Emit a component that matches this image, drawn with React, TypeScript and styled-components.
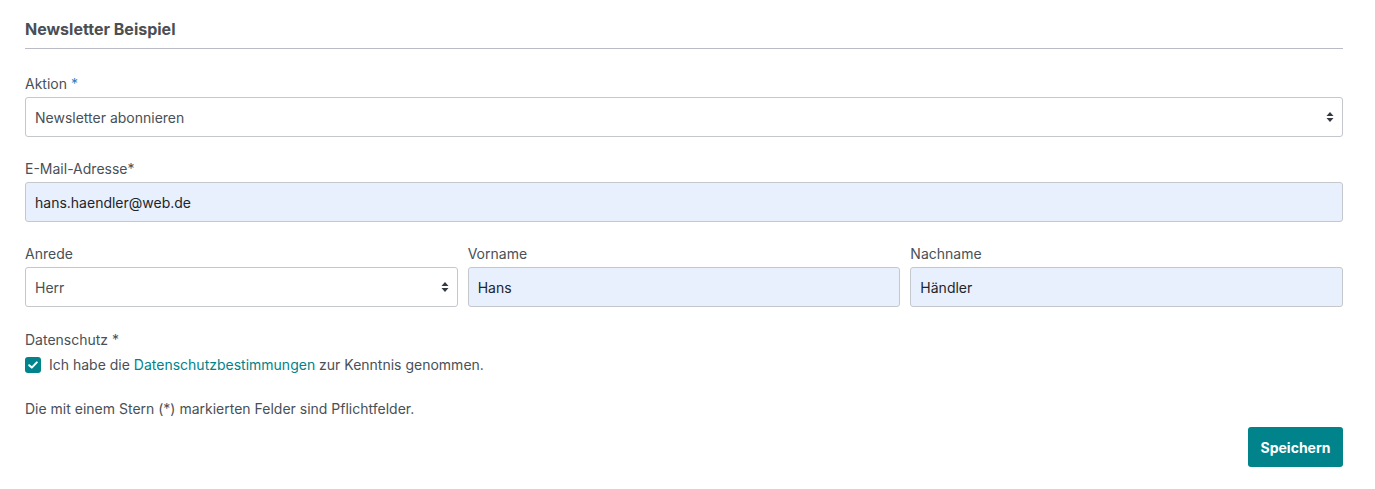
import React from "react";
import styled, { createGlobalStyle } from "styled-components";

const GlobalStyle = createGlobalStyle`
  * { box-sizing: border-box; }
  body {
    margin: 0;
    background: #ffffff;
    font-family: Inter, "Liberation Sans", sans-serif;
    color: #495057;
  }
`;

const App = () => {
  return (
    <>
      <GlobalStyle />
      <Page>
        <Title>Newsletter Beispiel</Title>
        <Form>
          <Field>
            <Label>
              Aktion <Star>*</Star>
            </Label>
            <SelectBox>
              <span>Newsletter abonnieren</span>
              <Caret />
            </SelectBox>
          </Field>
          <Field>
            <Label>E-Mail-Adresse*</Label>
            <InputBox filled>hans.haendler@web.de</InputBox>
          </Field>
          <Row>
            <Field>
              <Label>Anrede</Label>
              <SelectBox>
                <span>Herr</span>
                <Caret />
              </SelectBox>
            </Field>
            <Field>
              <Label>Vorname</Label>
              <InputBox filled>Hans</InputBox>
            </Field>
            <Field>
              <Label>Nachname</Label>
              <InputBox filled>Händler</InputBox>
            </Field>
          </Row>
          <Consent>
            <Label>Datenschutz *</Label>
            <CheckRow>
              <CheckBox>
                <svg width="10" height="8" viewBox="0 0 10 8">
                  <path
                    d="M1.2 4.2 L3.8 6.6 L8.8 1.4"
                    fill="none"
                    stroke="#fff"
                    strokeWidth="2"
                    strokeLinecap="round"
                    strokeLinejoin="round"
                  />
                </svg>
              </CheckBox>
              <span>
                Ich habe die <Link>Datenschutzbestimmungen</Link> zur Kenntnis
                genommen.
              </span>
            </CheckRow>
          </Consent>
          <Note>Die mit einem Stern (*) markierten Felder sind Pflichtfelder.</Note>
          <Actions>
            <Button>Speichern</Button>
          </Actions>
        </Form>
      </Page>
    </>
  );
};

export default App;

const Caret = () => (
  <CaretSvg width="8" height="12" viewBox="0 0 8 12">
    <path d="M4 1 L7.5 5 H0.5 Z" fill="#343a40" />
    <path d="M4 11 L7.5 7 H0.5 Z" fill="#343a40" />
  </CaretSvg>
);

const Page = styled.div`
  width: 1318px;
  margin-left: 25px;
  padding-top: 18px;
`;

const Title = styled.h2`
  margin: 0;
  font-size: 16px;
  font-weight: 700;
  line-height: 22px;
  color: #4a4f55;
  padding-bottom: 8px;
  border-bottom: 1px solid #b9bcc6;
`;

const Form = styled.div`
  display: flex;
  flex-direction: column;
  padding-top: 24px;
  gap: 21px;
`;

const Field = styled.div`
  display: flex;
  flex-direction: column;
  flex: 1;
  min-width: 0;
`;

const Consent = styled(Field)`
  margin-top: 1px;
`;

const Row = styled.div`
  display: flex;
  gap: 10px;
`;

const Label = styled.label`
  font-size: 14px;
  line-height: 21px;
  color: #495057;
  margin-bottom: 3px;
`;

const Star = styled.span`
  color: #2a7fc1;
`;

const BaseBox = styled.div`
  height: 40px;
  display: flex;
  align-items: center;
  padding: 0 9px;
  border: 1px solid #c4c7cc;
  border-radius: 3px;
  font-size: 14px;
`;

const SelectBox = styled(BaseBox)`
  justify-content: space-between;
  background: #ffffff;
  color: #495057;
  padding-right: 8px;
`;

const InputBox = styled(BaseBox)<{ filled?: boolean }>`
  background: ${(p) => (p.filled ? "#e8f0fe" : "#ffffff")};
  color: #212529;
`;

const CaretSvg = styled.svg`
  display: block;
`;

const CheckRow = styled.div`
  display: flex;
  align-items: center;
  gap: 8px;
  font-size: 14px;
  line-height: 21px;
  color: #495057;
  margin-top: 1px;
`;

const CheckBox = styled.span`
  width: 16px;
  height: 16px;
  border-radius: 3px;
  background: #00838a;
  display: flex;
  align-items: center;
  justify-content: center;
`;

const Link = styled.a`
  color: #00838a;
  text-decoration: none;
`;

const Note = styled.p`
  margin: 2px 0 0;
  font-size: 14px;
  line-height: 21px;
  color: #495057;
`;

const Actions = styled.div`
  display: flex;
  justify-content: flex-end;
  margin-top: -13px;
`;

const Button = styled.button`
  height: 40px;
  width: 95px;
  padding: 0;
  border: none;
  border-radius: 3px;
  background: #00838a;
  color: #ffffff;
  font-family: Inter, "Liberation Sans", sans-serif;
  font-size: 14px;
  font-weight: 700;
`;
